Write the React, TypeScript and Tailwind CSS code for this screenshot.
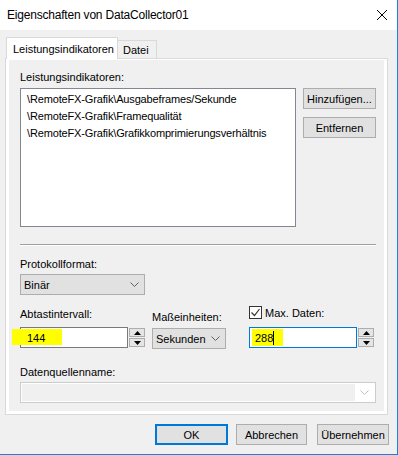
import React from "react";

const font = "font-['Liberation_Sans',sans-serif]";

function Chevron({ color = "#606060" }: { color?: string }) {
  return (
    <svg width="9" height="5" viewBox="0 0 9 5" fill="none">
      <path d="M0.5 0.5 L4.5 4.5 L8.5 0.5" stroke={color} strokeWidth="1" />
    </svg>
  );
}

function Spin() {
  return (
    <div className="flex flex-col gap-[1px] w-[16px] ml-[1px] mt-[1px]">
      <div className="h-[9px] border border-[#adadad] bg-[#e5e5e5] flex items-center justify-center">
        <svg width="7" height="4" viewBox="0 0 7 4">
          <path d="M0 4 L3.5 0 L7 4 Z" fill="#000" />
        </svg>
      </div>
      <div className="h-[9px] border border-[#adadad] bg-[#e5e5e5] flex items-center justify-center">
        <svg width="7" height="4" viewBox="0 0 7 4">
          <path d="M0 0 L3.5 4 L7 0 Z" fill="#000" />
        </svg>
      </div>
    </div>
  );
}

function Combo({ text, width }: { text: string; width: string }) {
  return (
    <div
      className={`${width} h-[21px] border border-[#adadad] bg-[#e1e1e1] flex items-center justify-between pl-[3px] pr-[5px]`}
    >
      <span>{text}</span>
      <Chevron />
    </div>
  );
}

function Button({ label, className = "" }: { label: string; className?: string }) {
  return (
    <div
      className={`h-[21px] border border-[#adadad] bg-[#e1e1e1] flex items-center justify-center ${className}`}
    >
      {label}
    </div>
  );
}

export default function App() {
  const counters = [
    "\\RemoteFX-Grafik\\Ausgabeframes/Sekunde",
    "\\RemoteFX-Grafik\\Framequalität",
    "\\RemoteFX-Grafik\\Grafikkomprimierungsverhältnis",
  ];

  return (
    <div
      className={`w-[398px] h-[455px] bg-[#f0f0f0] border-r border-b border-[#1883d7] text-[11px] leading-[16px] text-black whitespace-nowrap ${font}`}
    >
      {/* TITLE BAR */}
      <div className="h-[30px] bg-white flex items-center justify-between pl-[7px] pr-[10px]">
        <span className="text-[12px] tracking-[-0.2px]">Eigenschaften von DataCollector01</span>
        <svg width="10" height="10" viewBox="0 0 10 10">
          <path d="M0 0 L10 10 M10 0 L0 10" stroke="#000" strokeWidth="1" />
        </svg>
      </div>

      <div className="px-[5px] pt-[7px]">
        {/* TABS */}
        <div className="flex items-end h-[21px] relative z-10">
          <div className="ml-[1px] w-[112px] h-[22px] -mb-px bg-white border border-b-0 border-[#d9d9d9] flex items-center pl-[6px]">
            Leistungsindikatoren
          </div>
          <div className="w-[39px] h-[18px] border border-l-0 border-b-0 border-[#d9d9d9] flex items-center pl-[5px]">
            Datei
          </div>
        </div>

        {/* PANEL */}
        <div className="w-[383px] h-[357px] border border-[#d9d9d9] bg-white pt-[1px] px-[3px] pb-[3px]">
          <div className="h-full bg-[#f0f0f0] pl-[11px] pr-[8px] pt-[9px]">
            <div>Leistungsindikatoren:</div>

            <div className="flex mt-[3px]">
              <div className="w-[276px] h-[139px] border border-[#828790] bg-white pl-[6px] pt-[2px] leading-[17px] tracking-[-0.15px]">
                {counters.map((c) => (
                  <div key={c}>{c}</div>
                ))}
              </div>
              <div className="ml-[7px] flex flex-col gap-[8px]">
                <Button label="Hinzufügen..." className="w-[73px]" />
                <Button label="Entfernen" className="w-[73px]" />
              </div>
            </div>

            <div className="mt-[17px] h-[2px] border-t border-[#a0a0a0] border-b border-b-white" />

            <div className="mt-[10px]">Protokollformat:</div>
            <div className="mt-[2px]">
              <Combo text="Binär" width="w-[125px]" />
            </div>

            {/* INTERVAL ROW */}
            <div className="flex mt-[11px]">
              <div className="w-[125px]">
                <div>Abtastintervall:</div>
                <div className="flex mt-[5px] h-[21px]">
                  <div className="w-[109px] h-[21px] border border-[#7a7a7a] bg-white relative flex items-center">
                    <div className="absolute left-[-9px] top-[1px] w-[50px] h-[16px] bg-[#ffff00]" />
                    <span className="relative pl-[6px]">144</span>
                  </div>
                  <Spin />
                </div>
              </div>

              <div className="ml-[7px] w-[74px]">
                <div className="mt-[3px]">Maßeinheiten:</div>
                <div className="mt-[3px]">
                  <Combo text="Sekunden" width="w-[74px]" />
                </div>
              </div>

              <div className="ml-[23px] w-[125px]">
                <div className="flex items-center h-[13px]">
                  <div className="w-[13px] h-[13px] border border-[#333333] bg-white flex items-center justify-center">
                    <svg width="11" height="11" viewBox="0 0 11 11" fill="none">
                      <path d="M1.5 5.5 L4.5 8.5 L9.5 2" stroke="#333" strokeWidth="1.2" />
                    </svg>
                  </div>
                  <span className="ml-[3px]">Max. Daten:</span>
                </div>
                <div className="flex mt-[8px] h-[21px]">
                  <div className="w-[109px] h-[21px] border border-[#0078d7] bg-white relative flex items-center">
                    <div className="absolute left-[2px] top-[1px] w-[31px] h-[17px] bg-[#ffff00]" />
                    <span className="relative pl-[5px]">288</span>
                    <span className="relative w-px h-[14px] bg-black" />
                  </div>
                  <Spin />
                </div>
              </div>
            </div>

            <div className="mt-[15px]">Datenquellenname:</div>
            <div className="mt-[2px] w-[356px] h-[21px] border border-[#cccccc] bg-white p-[1px] flex">
              <div className="flex-1 bg-[#f0f0f0]" />
              <div className="w-[19px] flex items-center justify-center">
                <Chevron color="#bfbfbf" />
              </div>
            </div>
          </div>
        </div>

        {/* FOOTER BUTTONS */}
        <div className="flex mt-[9px] pl-[150px]">
          <div className="w-[73px] h-[21px] border-2 border-[#0078d7] bg-[#e1e1e1] flex items-center justify-center">
            OK
          </div>
          <Button label="Abbrechen" className="ml-[8px] w-[71px]" />
          <Button label="Übernehmen" className="ml-[10px] w-[72px]" />
        </div>
      </div>
    </div>
  );
}
